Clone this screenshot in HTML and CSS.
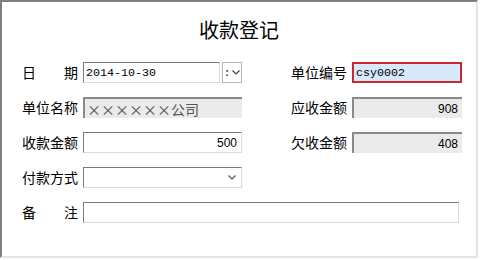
FILE: index.html
```html
<!DOCTYPE html>
<html lang="zh-CN">
<head>
    <meta charset="UTF-8">
    <meta name="viewport" content="width=device-width, initial-scale=1.0">
    <title>收款登记</title>
    <link rel="stylesheet" href="styles.css">
</head>
<body>
    <div class="frame">
        <h1 class="title">收款登记</h1>
        <div class="form">
            <label class="lbl">日　　期</label>
            <div class="date-cell">
                <input type="text" class="field" value="2014-10-30">
                <div class="spin">
                    <span class="colon">:</span>
                    <svg width="8" height="5" viewBox="0 0 8 5"><path d="M0.5 0.5 L4 4 L7.5 0.5" fill="none" stroke="#444" stroke-width="1.2"/></svg>
                </div>
            </div>
            <div class="spacer"></div>
            <label class="lbl">单位编号</label>
            <input type="text" class="field active" value="csy0002">

            <label class="lbl">单位名称</label>
            <input type="text" class="field readonly cjk" value="××××××公司" readonly>
            <div class="spacer"></div>
            <label class="lbl">应收金额</label>
            <input type="text" class="field readonly num" value="908" readonly>

            <label class="lbl">收款金额</label>
            <input type="text" class="field num" value="500">
            <div class="spacer"></div>
            <label class="lbl">欠收金额</label>
            <input type="text" class="field readonly num" value="408" readonly>

            <label class="lbl">付款方式</label>
            <div class="field combo">
                <svg width="8" height="5" viewBox="0 0 8 5"><path d="M0.5 0.5 L4 4 L7.5 0.5" fill="none" stroke="#555" stroke-width="1.2"/></svg>
            </div>
            <div class="spacer"></div>
            <div></div>
            <div></div>

            <label class="lbl">备　　注</label>
            <input type="text" class="field note" value="">
        </div>
    </div>
</body>
</html>
```

FILE: styles.css
```css
*{
    margin: 0;
    padding: 0;
    box-sizing: border-box;
}
body{
    background: #fff;
    font-family: "Noto Sans CJK SC", sans-serif;
}
.frame{
    width: 478px;
    height: 258px;
    border-top: 2px solid #7f7f7f;
    border-left: 2px solid #7f7f7f;
    border-right: 2px solid #e4e4e4;
    border-bottom: 2px solid #e4e4e4;
    background: #fff;
}
.title{
    font-size: 20px;
    font-weight: normal;
    text-align: center;
    line-height: 28px;
    padding-top: 14px;
    margin-bottom: 18px;
    color: #000;
}
.form{
    display: grid;
    grid-template-columns: 57px 159px 41px 57px 110px;
    grid-auto-rows: 21px;
    column-gap: 4px;
    row-gap: 14px;
    padding-left: 20px;
}
.lbl{
    font-size: 14px;
    line-height: 21px;
    color: #000;
    white-space: nowrap;
}
.field{
    height: 21px;
    width: 100%;
    border: 1px solid;
    border-color: #7a7a7a #dcdcdc #dcdcdc #7a7a7a;
    background: #fff;
    font-family: "Liberation Mono", monospace;
    font-size: 11.7px;
    padding: 0 2px;
    color: #000;
    outline: none;
}
.date-cell{
    display: flex;
    gap: 2px;
}
.date-cell .field{
    flex: 1;
    min-width: 0;
}
.spin{
    width: 20px;
    height: 21px;
    border: 1px solid #b4b4b4;
    display: flex;
    align-items: center;
    justify-content: center;
    gap: 2px;
    font-family: "Liberation Mono", monospace;
    font-size: 11px;
    color: #000;
}
.active{
    border: 2px solid #c8282e;
    background: #d9e9fc;
}
.readonly{
    background: #ebebeb;
    border-width: 2px 0 0 2px;
    border-color: #8a8a8a;
}
.cjk{
    font-family: "Noto Sans CJK SC", sans-serif;
    font-size: 14px;
    color: #555;
    letter-spacing: 0;
}
.num{
    font-family: "Liberation Sans", sans-serif;
    font-size: 12px;
    text-align: right;
    padding-right: 4px;
}
.combo{
    display: flex;
    align-items: center;
    justify-content: flex-end;
    padding-right: 5px;
}
.note{
    grid-column: 2 / 6;
    width: 376px;
}
```
